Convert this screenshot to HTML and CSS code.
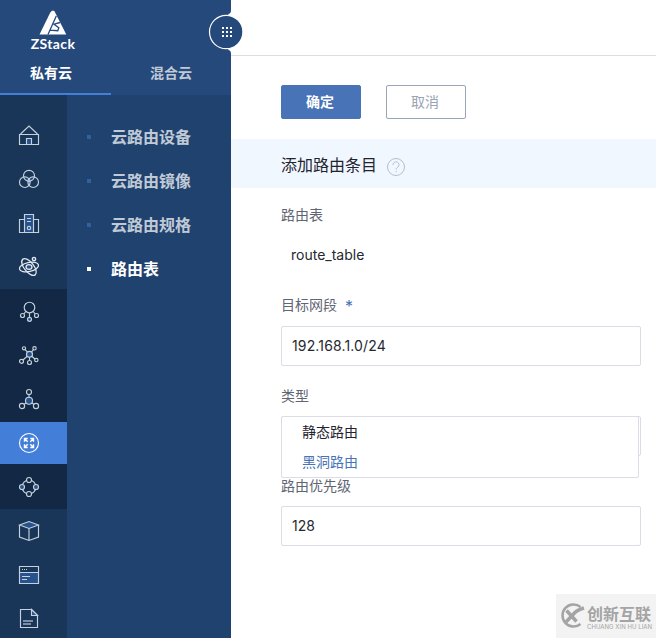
FILE: index.html
```html
<!DOCTYPE html>
<html lang="zh-CN">
<head>
<meta charset="utf-8">
<title>ZStack</title>
<link rel="stylesheet" href="styles.css">
</head>
<body>
<div class="app">
  <aside class="sidebar">
    <header class="brand">
      <div class="logo">
        <svg class="logo-mark" width="28" height="25" viewBox="0 0 28 25"><path class="solid" d="M11.300 2.500 13 0.800h2.200L27.300 24.500H.500z"/><path class="gap" d="M17.300 6 9 24.500M10.500 20.200 18.800 20.700 19.800 17.800 15 14.200 21 12.500"/></svg>
        <span class="logo-text">ZStack</span>
      </div>
      <nav class="tabs"><a class="tab active">私有云</a><a class="tab second">混合云</a></nav>
      <button class="apps"><svg width="36" height="36" viewBox="0 0 36 36"><path class="flare" d="M20 0Q23 0 23 -4V4zM20 36Q23 36 23 40V32z"/><circle class="disc" cx="18.200" cy="18" r="16.700"/><path class="solid" d="M14 13h2v2h-2zM18 13h2v2h-2zM22 13h2v2h-2zM14 17h2v2h-2zM18 17h2v2h-2zM22 17h2v2h-2zM14 21h2v2h-2zM18 21h2v2h-2zM22 21h2v2h-2z"/></svg></button>
    </header>
    <div class="menus">
      <nav class="rail">
        <a class="item"><svg viewBox="0 0 22 22"><path d="M2.500 10 11 2l8.500 8M1.500 10.500h19v10h-19z"/><path class="fill" d="M8.500 20.500v-6h5v6z"/></svg></a>
        <a class="item"><svg viewBox="0 0 22 22"><path class="patch" d="M6.500 11q4.500-1.500 9 0l-3 3-1.500 4-1.500-4z"/><circle cx="11" cy="7.800" r="5.500"/><circle cx="6.800" cy="14.200" r="5.300"/><circle cx="15.200" cy="14.200" r="5.300"/></svg></a>
        <a class="item"><svg viewBox="0 0 22 22"><path d="M6.500 7.500h-5v13h19v-13h-5"/><path class="fill" d="M6.500 2.500h9v18h-9zM9 6.500h4M9 9.500h4"/><circle cx="11" cy="16" r="1.700"/></svg></a>
        <a class="item bold"><svg viewBox="0 0 22 22"><ellipse cx="11" cy="11" rx="9.700" ry="4.500" transform="rotate(-12 11 11)"/><ellipse cx="11" cy="11" rx="10" ry="4.800" transform="rotate(52 11 11)"/><ellipse class="fill" cx="11" cy="11" rx="3" ry="2.300"/><circle class="fill" cx="16" cy="3" r="1.700"/></svg></a>
        <a class="item deep"><svg viewBox="0 0 22 22"><circle cx="11.500" cy="7.500" r="5.300"/><path d="m7.800 11.500-2 2.500m9.400-2.500 2 2.500m-5.700-1v4"/><circle cx="4.500" cy="15.500" r="2"/><circle cx="18.500" cy="15.500" r="2"/><circle class="fill" cx="11.500" cy="19.300" r="2"/></svg></a>
        <a class="item deep"><svg viewBox="0 0 22 22"><path d="M11.500 10.300 6 4.300m5.500 6 5-6m-5 6-8 7m8-7 6.500 5.700m-6.500-5.700v8.500"/><circle class="fill" cx="11.500" cy="10.300" r="3"/><circle class="base" cx="6" cy="4.300" r="1.600"/><circle class="base" cx="16.500" cy="4.300" r="1.700"/><circle class="base" cx="3.500" cy="17.300" r="2"/><circle class="base" cx="18.300" cy="16" r="1.700"/><circle class="base" cx="11.500" cy="18.500" r="2"/></svg></a>
        <a class="item deep"><svg viewBox="0 0 22 22"><path d="M11 12.700V4m0 8.700L4 18m7-5.300 7 5.300"/><circle class="fill" cx="11" cy="12.700" r="3.500"/><circle class="base" cx="11" cy="4" r="2.500"/><circle class="base" cx="4" cy="18" r="2.600"/><circle class="base" cx="18" cy="18" r="2.600"/></svg></a>
        <a class="item active"><svg viewBox="0 0 22 22"><circle cx="11" cy="11" r="9.500"/><path class="arrows" d="M9.700 6.500H6.500v3.200M6.500 6.500l3.200 3.200M12.300 6.500h3.200v3.200M15.500 6.500l-3.200 3.200M9.700 15.500H6.500v-3.200M6.500 15.500l3.200-3.200M12.300 15.500h3.200v-3.200M15.500 15.500l-3.200-3.200"/></svg></a>
        <a class="item deep"><svg viewBox="0 0 22 22"><circle cx="11" cy="11" r="7"/><circle class="base" cx="11" cy="4" r="2.500"/><circle class="fill" cx="4" cy="11" r="2.500"/><circle class="fill" cx="18" cy="11" r="2.500"/><circle class="base" cx="11" cy="18" r="2.500"/></svg></a>
        <a class="item"><svg viewBox="0 0 22 22"><path class="fill" d="M1.500 5 11 1.500 20.500 5 11 8.500z"/><path d="M1.500 5v12l9.500 3.500 9.500-3.500V5M11 8.500v12"/></svg></a>
        <a class="item"><svg viewBox="0 0 22 22"><path d="M1.500 2.500h19v6h-19zM4 5.500h1m1 0h1m1 0h1"/><path class="fill" d="M1.500 8.500h19v11h-19zM4 12.500h8M4 15.500h5"/></svg></a>
        <a class="item"><svg viewBox="0 0 22 22"><path d="M2.500 1.500h11l6 6v12h-17z"/><path class="fill" d="M13.500 1.500v6h6z"/><path class="lines" d="M5 13h10M5 16h8"/></svg></a>
      </nav>
      <nav class="submenu">
        <a class="entry">云路由设备</a>
        <a class="entry">云路由镜像</a>
        <a class="entry">云路由规格</a>
        <a class="entry current">路由表</a>
      </nav>
    </div>
  </aside>
  <main class="main">
    <div class="topbar"></div>
    <div class="actions"><button class="btn primary">确定</button><button class="btn">取消</button></div>
    <div class="title"><h1>添加路由条目</h1><svg width="20" height="20" viewBox="0 0 20 20"><circle cx="10" cy="10" r="8.500"/><path d="M7 8a3 3 0 1 1 4.700 2.300C10.600 11 10.100 11.400 10.100 12.600M10.100 14v1.300"/></svg></div>
    <form class="form">
      <label class="label">路由表</label>
      <div class="value">route_table</div>
      <label class="label">目标网段<span class="required">*</span></label>
      <div class="input address">192.168.1.0/24</div>
      <label class="label">类型</label>
      <div class="input select"><div class="dropdown"><div class="option">静态路由</div><div class="option chosen">黑洞路由</div></div></div>
      <label class="label priority">路由优先级</label>
      <div class="input">128</div>
    </form>
    <div class="watermark">
      <svg width="28" height="28" viewBox="0 0 28 28"><path class="ring" d="M22.500 5A11 11 0 1 0 22.500 22"/><path class="cross" d="m8.500 8.500 10 11"/><path class="cross" d="M8 20 16.500 11Q19 8 26 6"/></svg>
      <div class="mark-text"><b>创新互联</b><small>CHUANG XIN HU LIAN</small></div>
    </div>
  </main>
</div>
</body>
</html>
```
FILE: styles.css
```css
* { box-sizing: border-box; }
body { margin: 0; font: 14px/20px Inter, "Noto Sans CJK SC", sans-serif; color: #25282f; background: #fff; }
button { font: inherit; padding: 0; }
.app { display: flex; width: 656px; height: 638px; overflow: hidden; }
.sidebar { position: relative; z-index: 1; width: 231px; flex: none; display: flex; flex-direction: column; background: #20426f; }
.brand { position: relative; height: 95px; flex: none; background: #25497a; display: flex; flex-direction: column; justify-content: space-between; padding-top: 10px; }
.logo { width: 106px; display: flex; flex-direction: column; align-items: center; color: #fff; }
.logo-mark { display: block; }
.logo-mark .gap { fill: none; stroke: #25497a; stroke-width: 1.3; }
.solid { fill: #fff; stroke: none; }
.logo-text { font: bold 14px/18px Lato, sans-serif; letter-spacing: .35px; }
.tabs { display: flex; height: 33px; }
.tab { width: 111px; padding: 1px 0 0 30px; font-weight: 700; color: #c0cad7; }
.tab.second { width: 120px; padding-left: 39px; }
.tab.active { color: #fff; border-bottom: 2px solid #437ed9; }
.apps { position: absolute; left: 208px; top: 14px; width: 36px; height: 36px; border: 0; background: none; }
.apps svg { display: block; overflow: visible; }
.flare { fill: #fff; }
.disc { fill: #25497a; stroke: #fff; stroke-width: 1.2; }
.menus { display: flex; flex: 1; min-height: 0; }
.rail { width: 67px; padding-top: 18px; background: #193558; }
.item { display: flex; align-items: center; height: 44px; padding-left: 18px; }
.item svg { width: 22px; height: 22px; fill: none; stroke: #c5d2dc; stroke-width: 1.15; }
.item.bold svg { stroke: #e2e9ef; stroke-width: 1.3; }
.item.deep { background: #132844; }
.item.active { background: #437ed9; border: solid #132844; border-width: 1px 0; }
.item.active svg { stroke: #fff; }
.item .fill { fill: #28528d; }
.item .patch { fill: #28528d; stroke: none; }
.item .base { fill: #132844; }
.item .arrows { stroke-width: 1.4; }
.item .lines { stroke: #7d8ea5; stroke-width: 2; }
.submenu { flex: 1; padding-top: 20px; }
.entry { display: flex; align-items: center; height: 44px; padding-left: 20px; font-size: 16px; font-weight: 700; color: #c0cad7; }
.entry::before { content: ""; width: 4px; height: 4px; margin-right: 20px; background: #315f9f; }
.entry.current { color: #fff; }
.entry.current::before { background: #fff; }
.main { position: relative; flex: 1; }
.topbar { height: 56px; border-bottom: 1px solid #dcdee1; }
.actions { display: flex; gap: 25px; padding: 29px 0 20px 50px; }
.btn { width: 80px; height: 34px; padding-right: 2px; border: 1px solid #99a5b9; border-radius: 2px; background: #fff; color: #99a3b3; }
.btn.primary { border-color: #4873b6; background: #4873b6; color: #fff; font-weight: 700; }
.title { height: 49px; padding: 2px 0 0 50px; display: flex; align-items: center; gap: 9px; background: #f0f7fe; }
.title h1 { margin: 0; font-size: 16px; font-weight: 400; color: #1f2430; }
.title svg { fill: none; stroke: #b4bfcd; margin-top: 4px; }
.form { display: flex; flex-direction: column; width: 410px; padding: 17px 0 0 50px; }
.label { height: 20px; color: #5f6573; }
.required { margin-left: 8px; color: #4873b6; font-size: 16px; line-height: 16px; vertical-align: -2px; }
.value { height: 40px; margin: 10px 0 20px; padding: 10px; }
.input { height: 40px; margin: 11px 0 20px; padding: 9px 10px; border: 1px solid #dadde6; border-radius: 2px; }
.address { letter-spacing: .14px; }
.select { position: relative; margin-top: 10px; }
.dropdown { position: absolute; left: -1px; top: -1px; width: 358px; height: 62px; border: 1px solid #dadde6; border-radius: 2px; background: #fff; }
.option { height: 30px; padding: 5px 20px; color: #1f2430; }
.option.chosen { color: #4873b6; }
.priority { margin-bottom: -1px; }
.watermark { position: absolute; right: 0; bottom: 0; width: 100px; height: 44px; display: flex; align-items: center; gap: 1px; padding: 0 2px; background: #f3f3f3; color: #a4a4a4; }
.watermark svg { flex: none; fill: none; stroke: #a4a4a4; }
.ring { stroke-width: 2.5; }
.cross { stroke-width: 3.5; }
.mark-text { display: flex; flex-direction: column; width: 66px; padding-top: 2px; white-space: nowrap; }
.mark-text b { font-size: 16px; line-height: 18px; font-weight: 700; }
.mark-text small { font-size: 6px; line-height: 7px; letter-spacing: .05px; }
```
